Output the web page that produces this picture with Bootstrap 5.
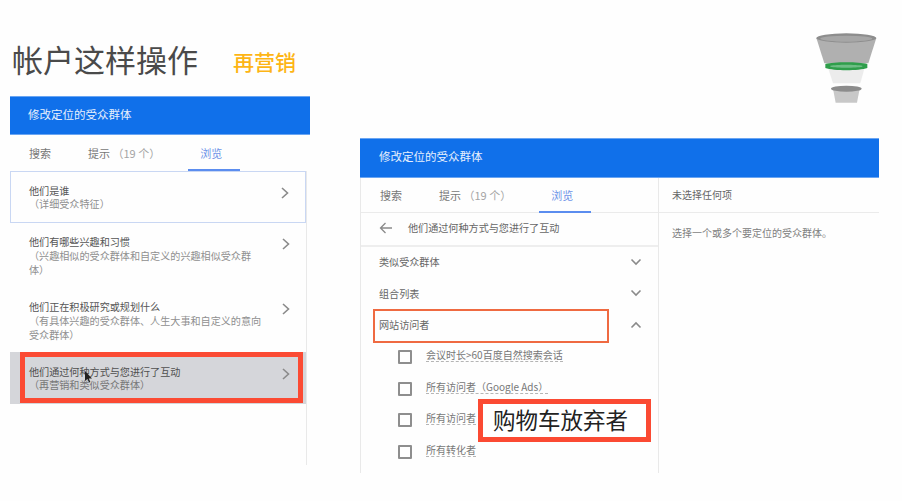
<!DOCTYPE html>
<html lang="zh-CN">
<head>
<meta charset="utf-8">
<link href="https://cdn.jsdelivr.net/npm/bootstrap@5.3.0/dist/css/bootstrap.min.css" rel="stylesheet">
<style>
html,body{height:100%;overflow:hidden}
body{background:#fefefe;font-family:"Noto Sans CJK SC","Liberation Sans",sans-serif;font-size:10px;color:#666;width:902px;height:501px}
.slide{padding-left:10px;height:501px}
.leftcol{width:300px;margin-right:50px}
.rightcol{width:519px}
.titlerow{height:96px;padding-left:2px;padding-top:38px}
.bigtitle{font-size:31px;color:#4a4a4a;line-height:42px;margin:0;font-weight:400}
.remk{font-size:21px;color:#fdb515;font-weight:500;margin-left:35px;line-height:30px;padding-top:8px}
.funnelrow{height:138px;padding-top:31px}
.bluehead{background:#1070ea;color:#e8f0fd;font-size:11.5px;height:39px;line-height:35px;padding-left:18px;border:1px solid #6aa5f2;border-width:1px 0}
.bluehead.wide{height:40px;padding-left:19px;line-height:34px}
.tabset{height:35px;padding-left:6px;gap:11px;font-size:11px;flex-wrap:nowrap}
.tabset .nav-link{padding:0 13px;line-height:35px;height:35px;color:#777;font-size:11px;white-space:nowrap}
.tabset .nav-link.active{color:#6d93e8;border-bottom:2px solid #5b8def;margin-left:4px;padding:0 18px 0 12px}
.tabset .faint{color:#a5a5a5}
.tabsleft{height:36px}
.tabsleft .nav-link,.tabsleft .nav-link.active{height:36px;line-height:37px}
.leftbody{width:297px;border-right:1px solid #e9e9e9;height:294px;border-radius:0}
.rowitem{border:0;background:transparent;padding:0 15px 0 19px;color:#555;font-size:10.1px;line-height:13.3px;display:flex;justify-content:space-between}
.rowitem .sub{color:#8f8f8f;display:block}
.rowitem svg{flex:none;margin-top:2px}
.rowone{height:52px;border:1px solid #c9d7f3;padding:12px 15px 0 18px}
.rowtwo{height:66px;padding-top:12px}
.rowthree{height:63px;padding-top:11px}
.rowtwo .sub,.rowthree .sub{margin-top:1px}
.rowfour{height:52px;background:#d5d6da;padding-top:13px;position:relative;color:#4f4f4f}
.rowfour .sub{color:#777}
.redframe{position:absolute;border:5px solid #fb4a33;left:10px;right:3px;top:0;bottom:1px;pointer-events:none}
.cursorico{position:absolute;left:74px;top:17px}
.rightbody{height:295px}
.browsepane{width:299px;border:1px solid #e9e9e9;border-width:0 1px 0 1px;height:295px}
.infopane{flex:1}
.tabline{border-bottom:1px solid #ebebeb}
.backrow{height:34px;border-bottom:2px solid #eee;padding:0 0 2px 18px;color:#666;font-size:10.1px}
.backrow span{margin-left:16px}
.grouprow{height:31.5px;padding:0 16px 2px 18px;font-size:10.1px;color:#666;position:relative}
.outlinebox{position:absolute;left:12px;width:236px;top:-1px;height:34px;border:2px solid #ef6a41}
.checkrow{height:31.5px;padding-left:37px;font-size:10px;color:#777}
.checkrow input.form-check-input{width:14px;height:14px;margin:0 14px 0 0;border:2px solid #8e8e8e;border-radius:1px;background-color:transparent;flex:none}
.checkrow span{border-bottom:1px dashed #b5b5b5;line-height:13px;margin-bottom:4px}
.overlayhost{position:relative}
.bigtag{position:absolute;left:117px;top:-6px;width:173px;height:43px;border:5px solid #fb4a33;background:#fff;color:#222;font-size:22.5px;line-height:31px;padding-left:10px;white-space:nowrap}
.infohead{height:35px;padding-left:13px;color:#666;font-size:10px;line-height:33px;border-bottom:1px solid #ebebeb;width:100%}
.infotext{padding:13px 0 0 13px;color:#808080;font-size:10px;line-height:14px}
</style>
</head>
<body>
<div class="slide d-flex">
  <div class="leftcol">
    <div class="titlerow d-flex align-items-start">
      <h1 class="bigtitle">帐户这样操作</h1>
      <div class="remk">再营销</div>
    </div>
    <div class="bluehead">修改定位的受众群体</div>
    <ul class="nav tabset tabsleft">
      <li class="nav-item"><a class="nav-link" href="#">搜索</a></li>
      <li class="nav-item"><a class="nav-link" href="#">提示 <span class="faint">（19 个）</span></a></li>
      <li class="nav-item"><a class="nav-link active" href="#">浏览</a></li>
    </ul>
    <div class="list-group leftbody">
      <div class="list-group-item rowitem rowone">
        <div>他们是谁<span class="sub">（详细受众特征）</span></div>
        <svg width="10" height="14" viewBox="0 0 10 14"><path d="M2 2l5.5 5L2 12" fill="none" stroke="#8a8a8a" stroke-width="1.6"/></svg>
      </div>
      <div class="list-group-item rowitem rowtwo">
        <div>他们有哪些兴趣和习惯<span class="sub">（兴趣相似的受众群体和自定义的兴趣相似受众群<br>体）</span></div>
        <svg width="10" height="14" viewBox="0 0 10 14"><path d="M2 2l5.5 5L2 12" fill="none" stroke="#8a8a8a" stroke-width="1.6"/></svg>
      </div>
      <div class="list-group-item rowitem rowthree">
        <div>他们正在积极研究或规划什么<span class="sub">（有具体兴趣的受众群体、人生大事和自定义的意向<br>受众群体）</span></div>
        <svg width="10" height="14" viewBox="0 0 10 14"><path d="M2 2l5.5 5L2 12" fill="none" stroke="#8a8a8a" stroke-width="1.6"/></svg>
      </div>
      <div class="list-group-item rowitem rowfour">
        <div>他们通过何种方式与您进行了互动<span class="sub">（再营销和类似受众群体）</span></div>
        <svg width="10" height="14" viewBox="0 0 10 14"><path d="M2 2l5.5 5L2 12" fill="none" stroke="#8a8a8a" stroke-width="1.6"/></svg>
        <div class="redframe"></div>
        <svg class="cursorico" width="8" height="12" viewBox="0 0 8 12"><path d="M1 0v10l2.4-2 1.6 3.6 1.4-.7L4.8 7.4H8z" fill="#222"/></svg>
      </div>
    </div>
  </div>
  <div class="rightcol">
    <div class="funnelrow d-flex justify-content-end">
      <svg width="64" height="75" viewBox="45 35 190 225">
        <path d="M48 56L72 132H204L228 56z" fill="#b0b0b0"/>
        <ellipse cx="138" cy="56" rx="90" ry="14" fill="#8d8d8d"/>
        <ellipse cx="138" cy="58" rx="78" ry="9" fill="#a6a6a6"/>
        <path d="M84 148L98 192H180L192 148z" fill="#ececec"/>
        <path d="M98 208L106 250H170L178 208z" fill="#c8c8c8"/>
        <ellipse cx="138" cy="208" rx="46" ry="9" fill="#8c8c8c"/>
        <path d="M75 134C100 127 176 127 201 134V146C176 155 100 155 75 146z" fill="#2f9e4b"/>
        <path d="M90 139C110 135 166 135 186 139V142C166 146 110 146 90 142z" fill="#6fbd85"/>
      </svg>
    </div>
    <div class="bluehead wide">修改定位的受众群体</div>
    <div class="d-flex rightbody">
      <div class="browsepane">
        <ul class="nav tabset tabline">
          <li class="nav-item"><a class="nav-link" href="#">搜索</a></li>
          <li class="nav-item"><a class="nav-link" href="#">提示 <span class="faint">（19 个）</span></a></li>
          <li class="nav-item"><a class="nav-link active" href="#">浏览</a></li>
        </ul>
        <div class="backrow d-flex align-items-center">
          <svg width="13" height="12" viewBox="0 0 13 12"><path d="M13 6H1.5M6.5 1L1.5 6l5 5" fill="none" stroke="#8a8a8a" stroke-width="1.3"/></svg>
          <span>他们通过何种方式与您进行了互动</span>
        </div>
        <div class="grouprow d-flex align-items-center justify-content-between">类似受众群体
          <svg width="12" height="8" viewBox="0 0 12 8"><path d="M1.5 1.5L6 6l4.5-4.5" fill="none" stroke="#8a8a8a" stroke-width="1.6"/></svg></div>
        <div class="grouprow d-flex align-items-center justify-content-between">组合列表
          <svg width="12" height="8" viewBox="0 0 12 8"><path d="M1.5 1.5L6 6l4.5-4.5" fill="none" stroke="#8a8a8a" stroke-width="1.6"/></svg></div>
        <div class="grouprow d-flex align-items-center justify-content-between">网站访问者
          <div class="outlinebox"></div>
          <svg width="12" height="8" viewBox="0 0 12 8"><path d="M1.5 6.5L6 2l4.5 4.5" fill="none" stroke="#8a8a8a" stroke-width="1.6"/></svg></div>
        <div class="checkrow d-flex align-items-center"><input class="form-check-input" type="checkbox" aria-label="会议时长"><span>会议时长&gt;60百度自然搜索会话</span></div>
        <div class="checkrow d-flex align-items-center"><input class="form-check-input" type="checkbox" aria-label="所有访问者"><span>所有访问者（Google Ads）</span></div>
        <div class="checkrow d-flex align-items-center overlayhost"><input class="form-check-input" type="checkbox" aria-label="所有访问者"><span>所有访问者</span><div class="bigtag">购物车放弃者</div></div>
        <div class="checkrow d-flex align-items-center"><input class="form-check-input" type="checkbox" aria-label="所有转化者"><span>所有转化者</span></div>
      </div>
      <div class="infopane">
        <div class="infohead">未选择任何项</div>
        <div class="infotext">选择一个或多个要定位的受众群体。</div>
      </div>
    </div>
  </div>
</div>
<script src="https://cdn.jsdelivr.net/npm/bootstrap@5.3.0/dist/js/bootstrap.bundle.min.js"></script>
</body>
</html>
